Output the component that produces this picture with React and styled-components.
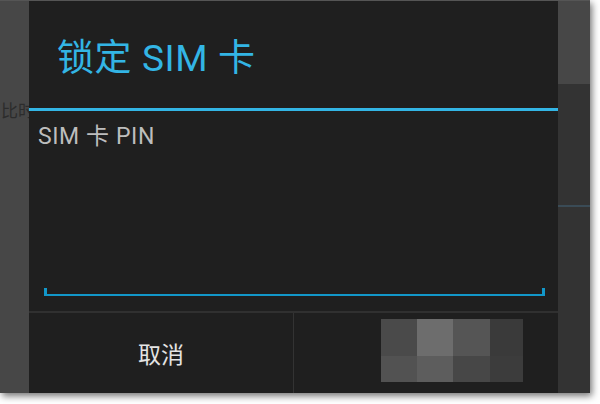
import React from "react";
import styled, { createGlobalStyle } from "styled-components";

const Global = createGlobalStyle`
  html, body { margin: 0; padding: 0; background: #ffffff; }
  #root { width: 600px; height: 404px; overflow: hidden; }
`;

const FONT = `Roboto, "Noto Sans", "Noto Sans CJK SC", sans-serif`;

const Frame = styled.div`
  display: flex;
  width: 590px;
  height: 393px;
  box-sizing: border-box;
  border-top: 1px solid #555555;
  background: #474747;
  box-shadow: 2px 3px 7px rgba(0, 0, 0, 0.55);
  font-family: ${FONT};
`;

const SideStrip = styled.div`
  width: ${(p) => p.$w}px;
  flex: none;
  overflow: hidden;
  display: flex;
  flex-direction: column;
  background: #474747;
`;

const BgText = styled.div`
  margin-top: 99px;
  padding-left: 1px;
  white-space: nowrap;
  font-size: 17px;
  line-height: 20px;
  color: #2c2c2c;
  font-family: "Noto Sans CJK SC", sans-serif;
`;

const StripTop = styled.div`
  height: 83px;
  background: #474747;
`;

const StripRest = styled.div`
  flex: 1;
  background: #333333;
  padding-top: 121px;
`;

const FaintLine = styled.div`
  height: 2px;
  background: #3a4b56;
`;

const Dialog = styled.div`
  width: 529px;
  flex: none;
  display: flex;
  flex-direction: column;
  background: #1f1f1f;
`;

const TitleBar = styled.div`
  height: 107px;
  display: flex;
  align-items: center;
  padding-left: 28px;
  box-sizing: border-box;
  font-size: 37px;
  letter-spacing: 0.6px;
  color: #33b5e5;
  white-space: nowrap;
`;

const TitleRule = styled.div`
  height: 3px;
  background: #33b5e5;
`;

const Body = styled.div`
  height: 200px;
  display: flex;
  flex-direction: column;
  padding: 0 13px 15px 15px;
  box-sizing: border-box;
`;

const Label = styled.div`
  margin: 13px 0 0 -6px;
  font-size: 23px;
  line-height: 26px;
  letter-spacing: 0.6px;
  color: #bdbdbd;
  white-space: nowrap;
`;

const Field = styled.div`
  margin-top: auto;
  height: 8px;
  box-sizing: border-box;
  border-style: solid;
  border-color: #1297c9;
  border-width: 0 3px 2px 3px;
`;

const Footer = styled.div`
  flex: 1;
  display: grid;
  grid-template-columns: 264px 265px;
  border-top: 2px solid #303030;
`;

const Button = styled.div`
  display: flex;
  align-items: ${(p) => (p.$mosaic ? "flex-start" : "center")};
  justify-content: ${(p) => (p.$mosaic ? "flex-start" : "center")};
  padding: ${(p) => (p.$mosaic ? "6px 0 0 87px" : "0")};
  box-sizing: border-box;
  font-size: 23px;
  color: #e4e4e4;
  border-left: ${(p) => (p.$divider ? "1px solid #333333" : "none")};
`;

const Mosaic = styled.div`
  display: grid;
  grid-template-columns: 36px 36px 37px 33px;
  grid-template-rows: 37px 26px;
`;

const Tile = styled.div`
  background: ${(p) => p.$c};
`;

const tiles = [
  "#4a4a4a", "#6d6d6d", "#555555", "#3a3a3a",
  "#525252", "#5d5d5d", "#474747", "#3c3c3c",
];

export default function App() {
  return (
    <>
      <Global />
      <Frame>
        <SideStrip $w={29}>
          <BgText>比时</BgText>
        </SideStrip>
        <Dialog>
          <TitleBar>锁定 SIM 卡</TitleBar>
          <TitleRule />
          <Body>
            <Label>SIM 卡 PIN</Label>
            <Field />
          </Body>
          <Footer>
            <Button>取消</Button>
            <Button $divider $mosaic>
              <Mosaic>
                {tiles.map((c, i) => (
                  <Tile key={i} $c={c} />
                ))}
              </Mosaic>
            </Button>
          </Footer>
        </Dialog>
        <SideStrip $w={32}>
          <StripTop />
          <StripRest>
            <FaintLine />
          </StripRest>
        </SideStrip>
      </Frame>
    </>
  );
}
